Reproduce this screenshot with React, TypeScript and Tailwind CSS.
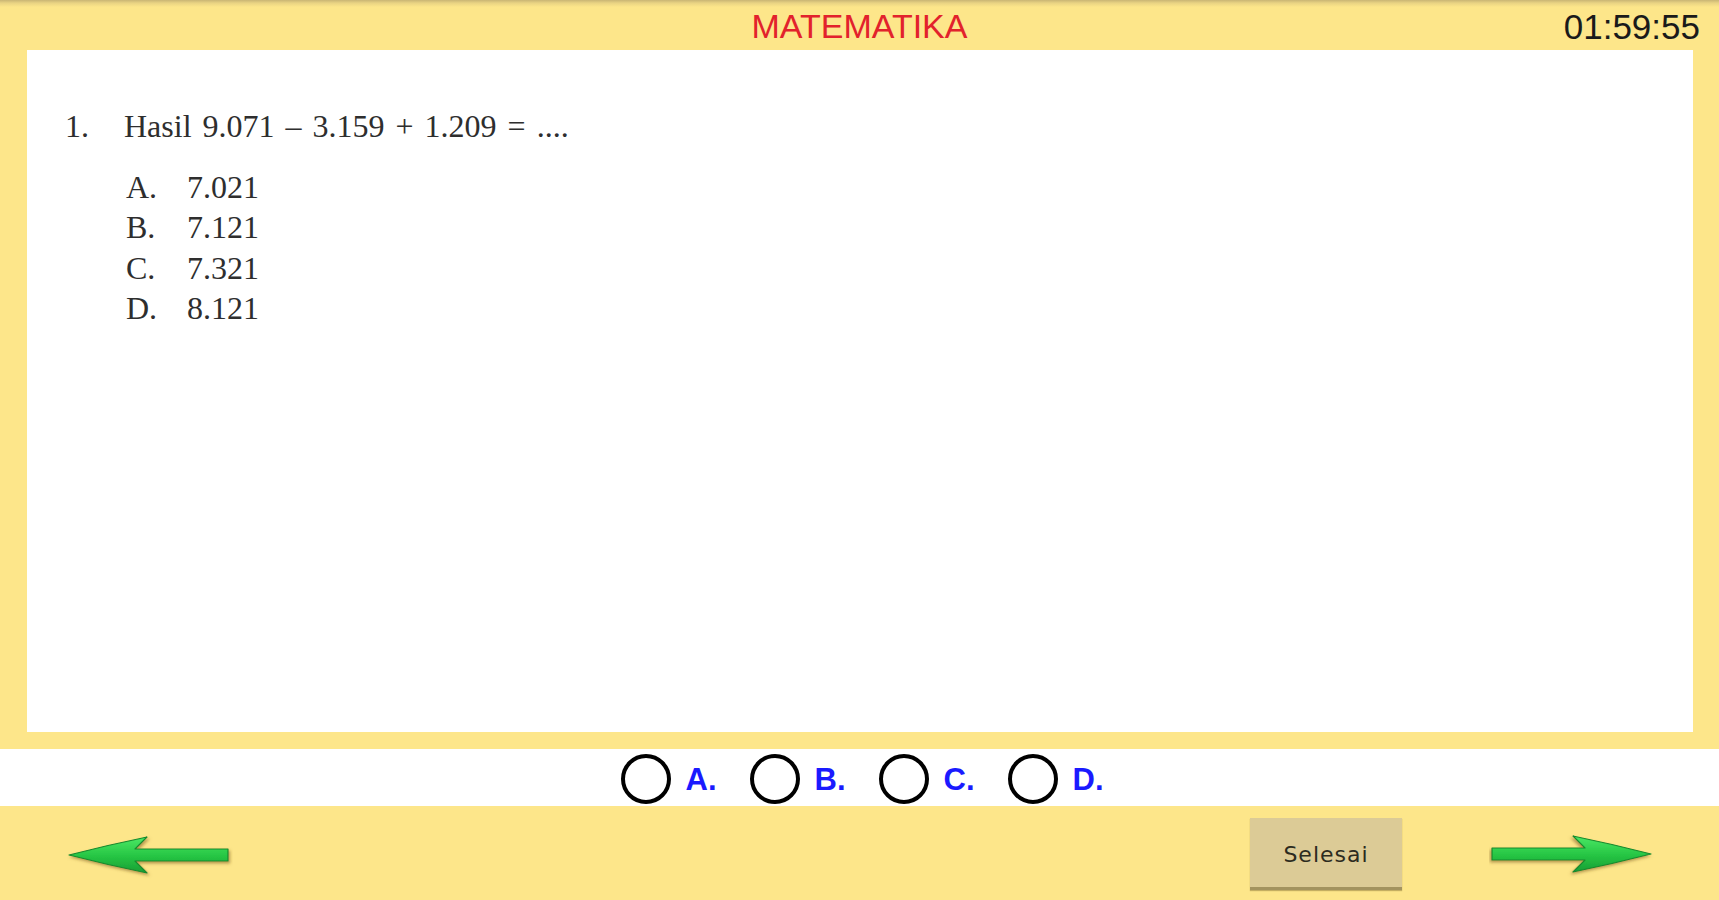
import React from 'react'

const options = [
  { key: 'A.', value: '7.021' },
  { key: 'B.', value: '7.121' },
  { key: 'C.', value: '7.321' },
  { key: 'D.', value: '8.121' }
]

function GreenArrow({ dir }: { dir: 'left' | 'right' }) {
  const id = `g-${dir}`
  return (
    <svg width="166" height="44" viewBox="0 0 166 44" className="block shrink-0 mt-[29px]">
      <defs>
        <linearGradient id={id} x1="0" y1="0" x2="0" y2="1">
          <stop offset="0" stopColor="#4be865" />
          <stop offset="0.55" stopColor="#25c443" />
          <stop offset="1" stopColor="#1a9e34" />
        </linearGradient>
        <filter id={`s-${dir}`} x="-10%" y="-20%" width="120%" height="150%">
          <feDropShadow dx="1.5" dy="2" stdDeviation="1.4" floodColor="#7b5a1c" floodOpacity="0.55" />
        </filter>
      </defs>
      <g transform={dir === 'right' ? 'translate(163 0) scale(-1 1)' : 'translate(1 1)'} filter={`url(#s-${dir})`}>
        <path
          d="M1 19 Q40 9 79 1 L67 13 L160 13 L160 25 L67 25 L79 37 Q40 29 1 19 Z"
          fill={`url(#${id})`}
          stroke="#168a2e"
          strokeWidth="1.2"
          strokeLinejoin="round"
        />
      </g>
    </svg>
  )
}

export default function App() {
  return (
    <div className="h-screen w-full flex flex-col bg-[#fde68a] overflow-hidden">
      {/* header */}
      <div className="relative h-[50px] shrink-0 flex items-center justify-center pt-[2px] bg-[linear-gradient(to_bottom,#c9b574_0px,#e9d383_3px,#fde68a_7px)]">
        <span className="text-[34px] leading-none text-[#e2222c] [font-family:'Liberation_Sans',sans-serif]">
          MATEMATIKA
        </span>
        <span className="absolute right-[19px] top-[9px] text-[35px] leading-none text-[#1a1a1a] [font-family:'Liberation_Sans',sans-serif]">
          01:59:55
        </span>
      </div>

      {/* question panel */}
      <div className="h-[699px] shrink-0 pl-[27px] pr-[26px] pb-[17px]">
        <div className="h-full bg-white pt-[56px] pl-[38px] text-[#2e2e2e] [font-family:'Liberation_Serif',serif] text-[32px] leading-[40.6px]">
          <div className="flex">
            <span className="w-[59px]">1.</span>
            <span className="[word-spacing:3px]">Hasil 9.071 – 3.159 + 1.209 = ....</span>
          </div>
          <div className="mt-[20px] pl-[61px]">
            {options.map((o) => (
              <div key={o.key} className="flex">
                <span className="w-[61px]">{o.key}</span>
                <span>{o.value}</span>
              </div>
            ))}
          </div>
        </div>
      </div>

      {/* answer band */}
      <div className="h-[57px] shrink-0 bg-white flex items-center justify-center pl-[10px] pt-[3px]">
        {options.map((o, i) => (
          <label key={o.key} className={`flex items-center cursor-pointer ${i > 0 ? 'ml-[28px]' : ''}`}>
            <span className="w-[50px] h-[50px] rounded-full border-[4px] border-black bg-white" />
            <span className="ml-[15px] w-[36px] text-[31px] font-bold leading-none text-[#1a1aff] [font-family:'Liberation_Sans',sans-serif]">
              {o.key}
            </span>
          </label>
        ))}
      </div>

      {/* navigation */}
      <div className="h-[94px] shrink-0 flex items-start pl-[67px] pr-[64px]">
        <GreenArrow dir="left" />
        <div className="flex-1" />
        <button
          type="button"
          className="w-[152px] h-[72px] mt-[12px] pt-[3px] bg-[#dccb96] border-b-[3px] border-[#a3935f] shadow-[0_1px_1px_rgba(90,70,20,0.35)] text-[22px] tracking-[1px] text-[#2c2b20] [font-family:'DejaVu_Sans',sans-serif]"
        >
          Selesai
        </button>
        <div className="w-[87px]" />
        <GreenArrow dir="right" />
      </div>
    </div>
  )
}
